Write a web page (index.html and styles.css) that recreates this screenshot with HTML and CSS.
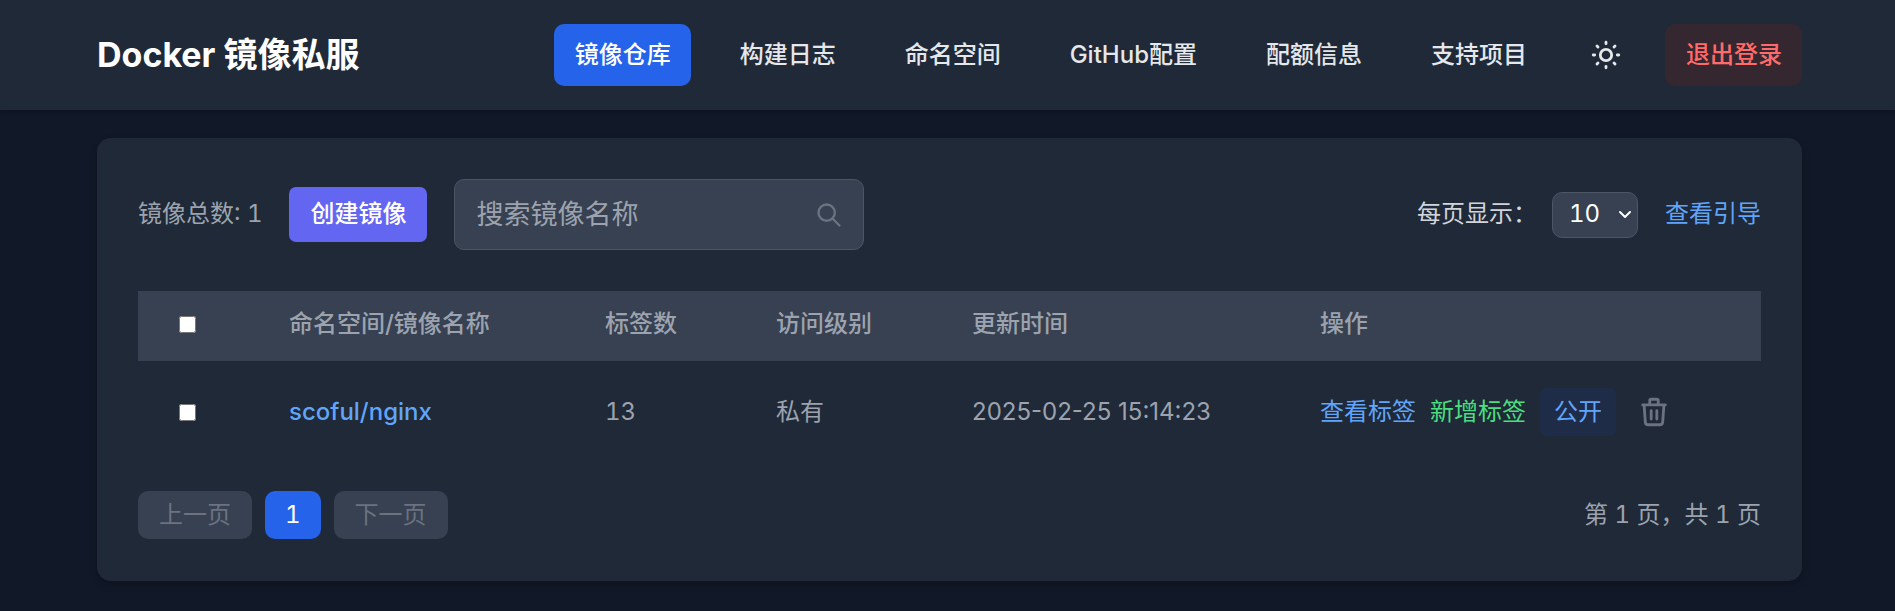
FILE: index.html
```html
<!DOCTYPE html>
<html lang="zh-CN">
<head>
<meta charset="utf-8">
<meta name="viewport" content="width=device-width, initial-scale=1">
<title>Docker 镜像私服</title>
<link rel="stylesheet" href="styles.css">
</head>
<body>
<header class="topbar">
  <h1 class="brand">Docker 镜像私服</h1>
  <nav class="nav">
    <a class="nav-link nav-link-active" href="#images">镜像仓库</a>
    <a class="nav-link" href="#logs">构建日志</a>
    <a class="nav-link" href="#namespaces">命名空间</a>
    <a class="nav-link" href="#github">GitHub配置</a>
    <a class="nav-link" href="#quota">配额信息</a>
    <a class="nav-link" href="#support">支持项目</a>
    <button class="theme-toggle" type="button" aria-label="切换主题">
      <svg class="icon" viewBox="0 0 24 24" aria-hidden="true"><path d="M12 3v1m0 16v1m9-9h-1M4 12H3m15.364 6.364l-.707-.707M6.343 6.343l-.707-.707m12.728 0l-.707.707M6.343 17.657l-.707.707M16 12a4 4 0 11-8 0 4 4 0 018 0z"/></svg>
    </button>
    <button class="nav-link logout" type="button">退出登录</button>
  </nav>
</header>
<main class="page">
  <section class="card">
    <div class="toolbar">
      <div class="toolbar-group">
        <span class="total">镜像总数: 1</span>
        <button class="create" type="button">创建镜像</button>
        <div class="search">
          <input class="search-input" type="text" placeholder="搜索镜像名称" aria-label="搜索镜像名称">
          <svg class="search-icon" viewBox="0 0 24 24" aria-hidden="true"><path d="M21 21l-6-6m2-5a7 7 0 11-14 0 7 7 0 0114 0z"/></svg>
        </div>
      </div>
      <div class="toolbar-group">
        <label class="size-label" for="page-size">每页显示：</label>
        <div class="size">
          <select class="size-select" id="page-size"><option>10</option><option>20</option><option>50</option></select>
          <svg class="size-arrow" viewBox="0 0 14 10" aria-hidden="true"><path d="M2 2l5 5 5-5"/></svg>
        </div>
        <a class="link guide" href="#guide">查看引导</a>
      </div>
    </div>
    <table class="images">
      <colgroup><col class="col-check"><col class="col-name"><col class="col-tags"><col class="col-access"><col class="col-time"><col></colgroup>
      <thead>
        <tr>
          <th><input class="check" type="checkbox" aria-label="全选"></th>
          <th>命名空间/镜像名称</th>
          <th>标签数</th>
          <th>访问级别</th>
          <th>更新时间</th>
          <th>操作</th>
        </tr>
      </thead>
      <tbody>
        <tr>
          <td><input class="check" type="checkbox" aria-label="选择 scoful/nginx"></td>
          <td><a class="link repo" href="#scoful/nginx">scoful/nginx</a></td>
          <td>13</td>
          <td>私有</td>
          <td class="date">2025-02-25 15:14:23</td>
          <td>
            <div class="actions">
              <a class="link" href="#tags">查看标签</a>
              <a class="link link-add" href="#new-tag">新增标签</a>
              <button class="publish" type="button">公开</button>
              <button class="delete" type="button" aria-label="删除">
                <svg class="icon" viewBox="0 0 24 24" aria-hidden="true"><path d="M19 7l-.867 12.142A2 2 0 0116.138 21H7.862a2 2 0 01-1.995-1.858L5 7m5 4v6m4-6v6m1-10V4a1 1 0 00-1-1h-4a1 1 0 00-1 1v3M4 7h16"/></svg>
              </button>
            </div>
          </td>
        </tr>
      </tbody>
    </table>
    <div class="pager">
      <div class="pager-buttons">
        <button class="page-button" type="button" disabled>上一页</button>
        <button class="page-button page-current" type="button">1</button>
        <button class="page-button" type="button" disabled>下一页</button>
      </div>
      <span>第 1 页，共 1 页</span>
    </div>
  </section>
</main>
</body>
</html>
```
FILE: styles.css
```css
* {
  box-sizing: border-box;
}

body {
  margin: 0;
  min-height: 100vh;
  background: #111827;
  color: #9ca3af;
  font-family: Inter, "Noto Sans CJK SC", sans-serif;
  font-size: 24px;
  line-height: 34px;
}

button,
input,
select {
  margin: 0;
  font: inherit;
  color: inherit;
}

button {
  padding: 0;
  border: 0;
  background: none;
  cursor: pointer;
}

a {
  text-decoration: none;
}

.icon {
  display: block;
  width: 34px;
  height: 34px;
}

.icon path,
.search-icon path,
.size-arrow path {
  fill: none;
  stroke: currentColor;
  stroke-width: 2;
  stroke-linecap: round;
  stroke-linejoin: round;
}

.topbar {
  display: flex;
  align-items: center;
  justify-content: space-between;
  padding: 24px 93px 24px 97px;
  background: #1f2937;
  box-shadow: 0 2px 4px rgba(0, 0, 0, 0.2);
}

.brand {
  margin: 0;
  color: #fff;
  font-size: 34px;
  font-weight: 700;
  line-height: 48px;
}

.nav {
  display: flex;
  align-items: center;
  gap: 28px;
}

.nav-link {
  padding: 14px 20px 14px 21px;
  border-radius: 10px;
  color: #e5e7eb;
  font-weight: 500;
  line-height: 34px;
}

.nav-link-active {
  background: #2563eb;
  color: #fff;
}

.theme-toggle {
  padding: 14px;
  color: #e5e7eb;
}

.logout {
  background: #35272f;
  color: #ff6b6b;
}

.page {
  padding: 28px 93px 30px 97px;
}

.card {
  padding: 41px 41px 42px;
  border-radius: 14px;
  background: #1f2937;
  box-shadow: 0 4px 8px rgba(0, 0, 0, 0.2);
  font-variant-numeric: tabular-nums;
}

.toolbar,
.toolbar-group,
.pager,
.pager-buttons,
.actions {
  display: flex;
  align-items: center;
}

.toolbar {
  justify-content: space-between;
  margin-bottom: 41px;
}

.toolbar-group {
  gap: 27px;
}

.total,
.size-label,
.guide {
  padding-bottom: 1px;
}

.create {
  padding: 10px 21px 11px;
  border-radius: 7px;
  background: #6366f1;
  color: #fff;
  font-weight: 500;
}

.search {
  display: grid;
  grid-template-columns: 1fr 48px;
  align-items: center;
  width: 410px;
  border: 1px solid #4b5563;
  border-radius: 10px;
  background: #374151;
}

.search-input {
  width: 100%;
  height: 69px;
  padding: 17px 0 17px 21px;
  border: 0;
  background: none;
  color: #fff;
  font-size: 27px;
  line-height: 35px;
}

.search-input::placeholder {
  color: #9ca3af;
  opacity: 1;
}

.search-icon {
  width: 28px;
  height: 28px;
  color: #6b7280;
}

.size-label {
  color: #d1d5db;
  font-feature-settings: "halt";
}

.size {
  display: grid;
  align-items: center;
}

.size-select {
  grid-area: 1 / 1;
  width: 86px;
  height: 46px;
  padding: 0 0 1px 16px;
  border: 1px solid #4b5563;
  border-radius: 10px;
  appearance: none;
  background: #374151;
  color: #fff;
}

.size-arrow {
  grid-area: 1 / 1;
  justify-self: end;
  width: 14px;
  height: 10px;
  margin-right: 6px;
  color: #fff;
  pointer-events: none;
}

.link {
  color: #60a5fa;
}

.link-add {
  color: #4ade80;
}

.repo {
  font-weight: 500;
}

.images {
  width: 100%;
  border-collapse: collapse;
  table-layout: fixed;
}

.images th,
.images td {
  padding: 0 0 0 41px;
  text-align: left;
}

.images th {
  height: 70px;
  padding-bottom: 4px;
  background: #374151;
  font-weight: 500;
}

.images td {
  height: 102px;
}

.images .date {
  font-variant-numeric: normal;
}

.col-check {
  width: 110px;
}

.col-name {
  width: 316px;
}

.col-tags {
  width: 171px;
}

.col-access {
  width: 196px;
}

.col-time {
  width: 348px;
}

.check {
  display: block;
  width: 17px;
  height: 17px;
}

.actions {
  gap: 14px;
}

.publish {
  padding: 7px 14px;
  border-radius: 7px;
  background: #1f2c48;
  color: #60a5fa;
}

.delete {
  padding: 7px;
  color: #6b7280;
}

.pager {
  justify-content: space-between;
  margin-top: 28px;
}

.pager-buttons {
  gap: 13px;
}

.page-button {
  padding: 7px 21px;
  border-radius: 10px;
  background: #374151;
  color: #6b7280;
}

.page-current {
  padding-inline: 20px;
  background: #2563eb;
  color: #fff;
}
```
